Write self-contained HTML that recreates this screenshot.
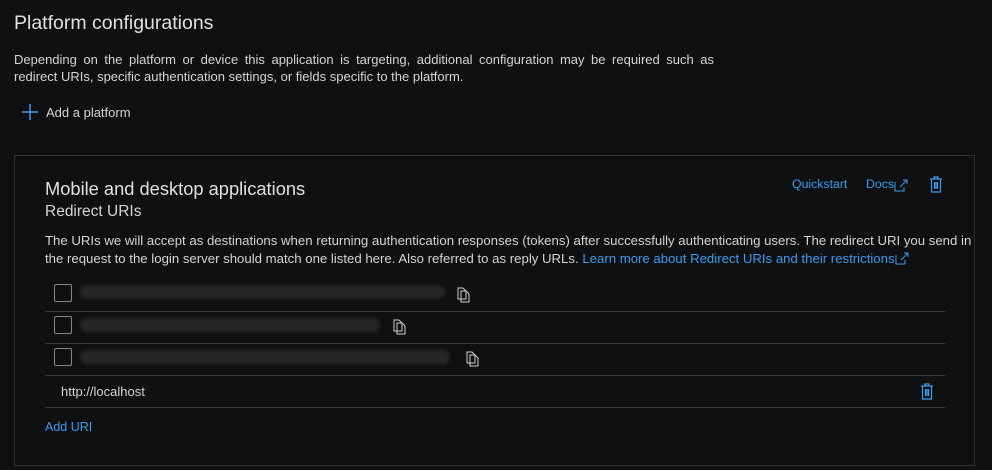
<!DOCTYPE html>
<html><head><style>
body{margin:0;width:992px;height:470px;background:#0f1012;font-family:"Liberation Sans",sans-serif;color:#d4d4d4;position:relative;overflow:hidden}
.a{position:absolute;white-space:nowrap}
.blue{color:#3b9cf0}
.line{position:absolute;left:45px;width:900px;height:1px;background:#383b3e}
.cb{position:absolute;left:54px;width:16px;height:16px;border:1px solid #8a8580;border-radius:2px}
.blur{position:absolute;height:14px;background:#262729;border-radius:8px;filter:blur(1.5px)}
</style></head><body>
<div class="a" style="left:14px;top:12px;font-size:19.5px;color:#e0e0e0">Platform configurations</div>
<div class="a" style="left:14px;top:51px;font-size:13px;width:700px;white-space:normal;text-align:justify;text-align-last:left;line-height:17px">Depending on the platform or device this application is targeting, additional configuration may be required such as redirect URIs, specific authentication settings, or fields specific to the platform.</div>
<svg class="a" style="left:22px;top:104px" width="16" height="16"><path d="M8 0V16M0 8H16" stroke="#3b9cf0" stroke-width="1.5"/></svg>
<div class="a" style="left:46px;top:105px;font-size:13px">Add a platform</div>
<div style="position:absolute;left:14px;top:155px;width:961px;height:311px;border:1px solid #2f3134;box-sizing:border-box"></div>
<div class="a" style="left:45px;top:178px;font-size:18.3px;color:#e0e0e0">Mobile and desktop applications</div>
<div class="a" style="left:45px;top:203px;font-size:15.5px">Redirect URIs</div>
<div class="a blue" style="left:792px;top:177px;font-size:12.3px">Quickstart</div>
<div class="a blue" style="left:866px;top:177px;font-size:12.3px">Docs</div>
<svg class="a" style="left:894px;top:179px" width="14" height="14"><path d="M1 3V12H10V8M6 8L13 1M9 1H13V5" stroke="#3b9cf0" fill="none"/></svg>
<svg class="a" style="left:929px;top:176px" width="14" height="17"><path d="M1 3H13M5 3V1H9V3M2.5 3V16H11.5V3M5.5 6V13M7 6V13M8.5 6V13" stroke="#3b9cf0" fill="none" stroke-width="1.2"/></svg>
<div class="a" style="left:45px;top:232px;font-size:13.2px;line-height:18px">The URIs we will accept as destinations when returning authentication responses (tokens) after successfully authenticating users. The redirect URI you send in<br>the request to the login server should match one listed here. Also referred to as reply URLs. <span class="blue">Learn more about Redirect URIs and their restrictions</span><svg width="14" height="13" style="vertical-align:-2px"><path d="M1 3V12H10V8M6 8L13 1M9 1H13V5" stroke="#3b9cf0" fill="none"/></svg></div>
<div class="cb" style="top:284px"></div>
<div class="blur" style="left:80px;top:285px;width:365px"></div>
<svg class="a" style="left:457px;top:287px" width="15" height="17"><path d="M1 1H6L9 4V12H1Z M4 4H9L12 7V15H4Z" stroke="#cfcfcf" fill="#0f1012"/></svg>
<div class="line" style="top:311px"></div>
<div class="cb" style="top:316px"></div>
<div class="blur" style="left:80px;top:318px;width:300px"></div>
<svg class="a" style="left:393px;top:319px" width="15" height="17"><path d="M1 1H6L9 4V12H1Z M4 4H9L12 7V15H4Z" stroke="#cfcfcf" fill="#0f1012"/></svg>
<div class="line" style="top:343px"></div>
<div class="cb" style="top:348px"></div>
<div class="blur" style="left:80px;top:350px;width:370px"></div>
<svg class="a" style="left:466px;top:351px" width="15" height="17"><path d="M1 1H6L9 4V12H1Z M4 4H9L12 7V15H4Z" stroke="#cfcfcf" fill="#0f1012"/></svg>
<div class="line" style="top:375px"></div>
<div class="a" style="left:61px;top:384px;font-size:13px">http://localhost</div>
<svg class="a" style="left:920px;top:383px" width="14" height="17"><path d="M1 3H13M5 3V1H9V3M2.5 3V16H11.5V3M5.5 6V13M7 6V13M8.5 6V13" stroke="#3b9cf0" fill="none" stroke-width="1.2"/></svg>
<div class="line" style="top:407px"></div>
<div class="a blue" style="left:45px;top:420px;font-size:12.5px">Add URI</div>
</body></html>
